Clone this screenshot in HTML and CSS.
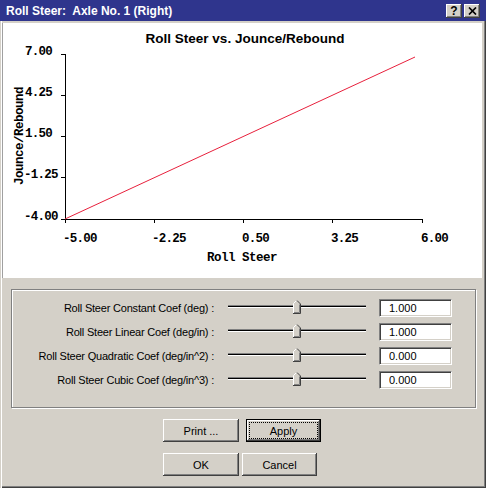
FILE: index.html
```html
<!DOCTYPE html>
<html lang="en">
<head>
    <meta charset="UTF-8">
    <title>Roll Steer</title>
    <link rel="stylesheet" href="styles.css">
</head>
<body>
    <div class="window">
        <div class="titlebar">
            <span class="caption">Roll Steer:  Axle No. 1 (Right)</span>
            <div class="caption-buttons">
                <button class="cap-btn">?</button>
                <button class="cap-btn">
                    <svg width="9" height="8" viewBox="0 0 9 8">
                        <path d="M1 0.5l7 7M8 0.5l-7 7" stroke="#000" stroke-width="1.7"/>
                    </svg>
                </button>
            </div>
        </div>
        <div class="body">
            <div class="plot">
                <svg width="479" height="255" viewBox="3 23 479 255">
                    <text class="chart-title" x="245" y="43" text-anchor="middle">Roll Steer vs. Jounce/Rebound</text>

                    <!-- axes and ticks -->
                    <path class="axis" d="M65.5 54V219.5H423M61 54.5h4M61 95.5h4M61 136.5h4M61 177.5h4M61 219.5h4
                        M65.5 219v4M154.5 219v4M243.5 219v4M332.5 219v4M422.5 219v4"/>

                    <text class="tick" x="25" y="55">7.00</text>
                    <text class="tick" x="25" y="96">4.25</text>
                    <text class="tick" x="25" y="137">1.50</text>
                    <text class="tick" x="24" y="178">-1.25</text>
                    <text class="tick" x="24" y="220">-4.00</text>

                    <text class="tick" x="63" y="242">-5.00</text>
                    <text class="tick" x="152" y="242">-2.25</text>
                    <text class="tick" x="242" y="242">0.50</text>
                    <text class="tick" x="331" y="242">3.25</text>
                    <text class="tick" x="421" y="242">6.00</text>

                    <text class="axis-title" x="242" y="261" text-anchor="middle">Roll Steer</text>
                    <text class="axis-title" transform="translate(23 136) rotate(-90)" text-anchor="middle">Jounce/Rebound</text>

                    <line class="curve" x1="65" y1="219" x2="415" y2="57"/>
                </svg>
            </div>

            <div class="group">
                <div class="coef-row">
                    <label>Roll Steer Constant Coef (deg) :</label>
                    <div class="slider">
                        <svg class="thumb" width="8" height="14" viewBox="0 0 8 14">
                            <path d="M0 3.5L3.5 0 7.5 4V13.5H0z" fill="#d4d0c8"/>
                            <path d="M0.5 13V3.5L3.5 0.5" stroke="#fff" fill="none"/>
                            <path d="M4 0.5L7.5 4V13.5H0" stroke="#404040" fill="none"/>
                            <path d="M6.5 4.5V12.5H1" stroke="#808080" fill="none"/>
                        </svg>
                    </div>
                    <input type="text" value="1.000">
                </div>
                <div class="coef-row">
                    <label>Roll Steer Linear Coef (deg/in) :</label>
                    <div class="slider">
                        <svg class="thumb" width="8" height="14" viewBox="0 0 8 14">
                            <path d="M0 3.5L3.5 0 7.5 4V13.5H0z" fill="#d4d0c8"/>
                            <path d="M0.5 13V3.5L3.5 0.5" stroke="#fff" fill="none"/>
                            <path d="M4 0.5L7.5 4V13.5H0" stroke="#404040" fill="none"/>
                            <path d="M6.5 4.5V12.5H1" stroke="#808080" fill="none"/>
                        </svg>
                    </div>
                    <input type="text" value="1.000">
                </div>
                <div class="coef-row">
                    <label>Roll Steer Quadratic Coef (deg/in^2) :</label>
                    <div class="slider">
                        <svg class="thumb" width="8" height="14" viewBox="0 0 8 14">
                            <path d="M0 3.5L3.5 0 7.5 4V13.5H0z" fill="#d4d0c8"/>
                            <path d="M0.5 13V3.5L3.5 0.5" stroke="#fff" fill="none"/>
                            <path d="M4 0.5L7.5 4V13.5H0" stroke="#404040" fill="none"/>
                            <path d="M6.5 4.5V12.5H1" stroke="#808080" fill="none"/>
                        </svg>
                    </div>
                    <input type="text" value="0.000">
                </div>
                <div class="coef-row">
                    <label>Roll Steer Cubic Coef (deg/in^3) :</label>
                    <div class="slider">
                        <svg class="thumb" width="8" height="14" viewBox="0 0 8 14">
                            <path d="M0 3.5L3.5 0 7.5 4V13.5H0z" fill="#d4d0c8"/>
                            <path d="M0.5 13V3.5L3.5 0.5" stroke="#fff" fill="none"/>
                            <path d="M4 0.5L7.5 4V13.5H0" stroke="#404040" fill="none"/>
                            <path d="M6.5 4.5V12.5H1" stroke="#808080" fill="none"/>
                        </svg>
                    </div>
                    <input type="text" value="0.000">
                </div>
            </div>

            <div class="buttons">
                <button class="btn">Print ...</button>
                <button class="btn default apply"><span>Apply</span></button>
            </div>
            <div class="buttons second">
                <button class="btn">OK</button>
                <button class="btn cancel">Cancel</button>
            </div>
        </div>
    </div>
</body>
</html>
```

FILE: styles.css
```css
body {
    margin: 0;
}
.window {
    width: 486px;
    height: 488px;
    display: flex;
    flex-direction: column;
    background: #d4d0c8;
    font-family: "Liberation Sans", Arial, sans-serif;
    font-size: 11px;
}
.titlebar {
    height: 21px;
    flex-shrink: 0;
    display: flex;
    align-items: center;
    justify-content: space-between;
    padding: 0 6px;
    background: #2f358d;
    color: #fff;
}
.caption {
    font-weight: bold;
    font-size: 12px;
    white-space: pre;
    padding-top: 1px;
}
.caption-buttons {
    display: flex;
    gap: 2px;
}
.cap-btn {
    width: 16px;
    height: 14px;
    padding: 0;
    border: none;
    display: flex;
    align-items: center;
    justify-content: center;
    background: #d4d0c8;
    box-shadow: inset -1px -1px #404040, inset 1px 1px #fff, inset -2px -2px #808080;
    font: bold 12px "Liberation Sans", Arial, sans-serif;
    color: #000;
}
.body {
    flex: 1;
    border-left: 1px solid #d4d0c8;
    box-shadow: inset 1px 0 #fff, inset -1px -1px #404040, inset -2px -2px #808080;
    padding: 2px 4px 0 1px;
}
.plot {
    height: 255px;
    border-left: 1px solid #a0a0a0;
    background: #fff;
}
.plot svg {
    display: block;
}
.chart-title {
    font: bold 13.5px "Liberation Sans", Arial, sans-serif;
}
.axis {
    stroke: #000;
    fill: none;
}
.tick {
    font: bold 12.5px "Liberation Mono", "Courier New", monospace;
    letter-spacing: -0.75px;
}
.axis-title {
    font: bold 12.5px "Liberation Mono", "Courier New", monospace;
    letter-spacing: -0.5px;
}
.curve {
    stroke: #e8203c;
    stroke-width: 1;
}
.group {
    width: 465px;
    height: 119px;
    box-sizing: border-box;
    margin: 11px 0 0 9px;
    padding-top: 6px;
    border: 1px solid #808080;
    box-shadow: 1px 1px #fff, inset 1px 1px #fff;
}
.coef-row {
    height: 24px;
    display: flex;
    align-items: center;
}
.coef-row label {
    width: 202px;
    text-align: right;
    white-space: nowrap;
    letter-spacing: -0.2px;
}
.slider {
    width: 138px;
    height: 24px;
    margin-left: 14px;
    display: flex;
    justify-content: center;
    align-items: flex-start;
    background: linear-gradient(to bottom, transparent 9px, #808080 9px, #808080 10px, #000 10px, #000 11px, #fff 11px, #fff 12px, transparent 12px);
}
.thumb {
    margin-top: 4px;
}
.coef-row input {
    width: 73px;
    height: 18px;
    box-sizing: border-box;
    margin-left: 13px;
    padding: 0 0 0 9px;
    border: 1px solid;
    border-color: #808080 #fff #fff #808080;
    box-shadow: inset 1px 1px #404040, inset -1px -1px #d4d0c8;
    font: 11px "Liberation Sans", Arial, sans-serif;
    color: #000;
    outline: none;
}
.buttons {
    display: flex;
    margin: 11px 0 0 161px;
}
.btn {
    width: 76px;
    height: 23px;
    padding: 0;
    border: none;
    display: flex;
    align-items: center;
    justify-content: center;
    background: #d4d0c8;
    box-shadow: inset -1px -1px #404040, inset 1px 1px #fff, inset -2px -2px #808080;
    font: 11px "Liberation Sans", Arial, sans-serif;
    color: #000;
}
.btn.default {
    padding: 3px;
    box-shadow: inset 0 0 0 1px #000, inset -2px -2px #404040, inset 2px 2px #fff, inset -3px -3px #808080;
}
.btn.default span {
    flex: 1;
    align-self: stretch;
    display: flex;
    align-items: center;
    justify-content: center;
    border: 1px dotted #000;
}
.apply {
    width: 75px;
    margin-left: 7px;
}
.cancel {
    width: 75px;
    margin-left: 3px;
}
```
